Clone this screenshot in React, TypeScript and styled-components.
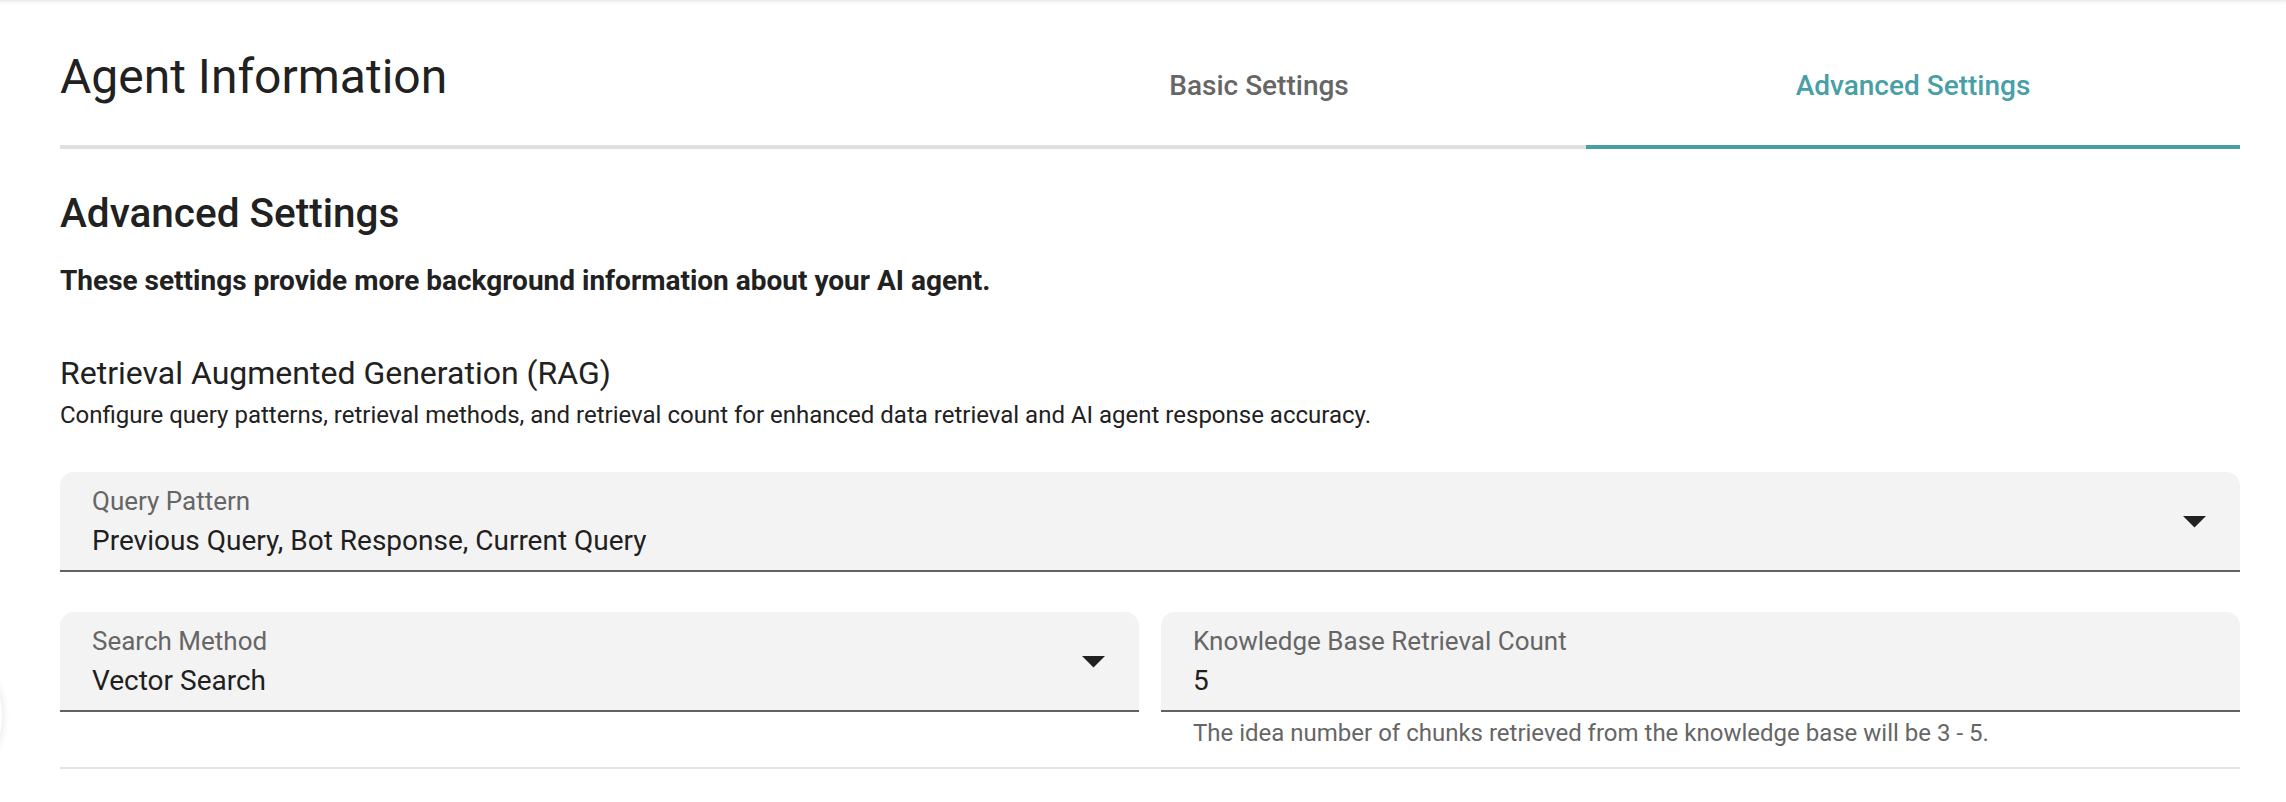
import React from "react";
import styled, { createGlobalStyle } from "styled-components";

const GlobalStyle = createGlobalStyle`
  html, body {
    margin: 0;
    padding: 0;
    background: #ffffff;
  }
  body {
    font-family: Roboto, "Noto Sans", "Liberation Sans", sans-serif;
    color: #212121;
  }
  * {
    box-sizing: border-box;
  }
`;

const Page = styled.div`
  position: relative;
  min-height: 802px;
  padding: 0 46px 0 60px;
  background: linear-gradient(to bottom, #e9e9e9 0, #f7f7f7 2px, #ffffff 5px);
  overflow: hidden;
`;

const EdgeShadow = styled.div`
  position: absolute;
  left: -44px;
  top: 668px;
  width: 46px;
  height: 96px;
  border-radius: 50%;
  background: #ffffff;
  box-shadow: 0 0 8px rgba(0, 0, 0, 0.12);
`;

const Header = styled.div`
  display: grid;
  grid-template-columns: 4fr 3fr 3fr;
  height: 149px;
`;

const Title = styled.h1`
  margin: 0;
  padding-top: 49px;
  font-size: 48px;
  line-height: 56px;
  font-weight: 400;
  color: #212121;
  border-bottom: 4px solid #e0e0e0;
`;

const Tab = styled.button<{ $active?: boolean }>`
  display: flex;
  align-items: center;
  justify-content: center;
  padding: 27px 0 0;
  margin: 0;
  border: none;
  border-bottom: 4px solid ${(p) => (p.$active ? "#489fa5" : "#e0e0e0")};
  background: transparent;
  font-family: Roboto, "Noto Sans", sans-serif;
  font-size: 28px;
  line-height: 32px;
  font-weight: 500;
  color: ${(p) => (p.$active ? "#489fa5" : "#666666")};
  cursor: pointer;
`;

const SectionTitle = styled.h2`
  margin: 40px 0 0;
  font-size: 40.5px;
  line-height: 48px;
  font-weight: 500;
  color: #212121;
`;

const Lead = styled.p`
  margin: 28px 0 0;
  font-size: 28px;
  line-height: 32px;
  font-weight: 700;
  color: #212121;
`;

const GroupTitle = styled.h3`
  margin: 57px 0 0;
  font-size: 32px;
  line-height: 38px;
  font-weight: 400;
  color: #212121;
`;

const GroupDesc = styled.p`
  margin: 10px 0 0;
  font-size: 24px;
  line-height: 26px;
  font-weight: 400;
  color: #212121;
`;

const FieldStack = styled.div`
  margin-top: 44px;
  display: flex;
  flex-direction: column;
  gap: 40px;
`;

const Row = styled.div`
  display: grid;
  grid-template-columns: 1fr 1fr;
  column-gap: 22px;
`;

const Column = styled.div`
  display: flex;
  flex-direction: column;
`;

const Field = styled.div<{ $select?: boolean }>`
  display: flex;
  align-items: center;
  height: 100px;
  padding: 15px ${(p) => (p.$select ? "34px" : "32px")} 13px 32px;
  background: #f3f3f3;
  border-radius: 14px 14px 0 0;
  border-bottom: 2px solid #616161;
`;

const FieldText = styled.div`
  flex: 1;
  display: flex;
  flex-direction: column;
  gap: 6px;
`;

const Label = styled.span`
  font-size: 26px;
  line-height: 30px;
  color: #666666;
`;

const Value = styled.span`
  font-size: 28px;
  line-height: 34px;
  color: #1f1f1f;
  padding-top: 2px;
`;

const Helper = styled.p`
  margin: 7px 0 0;
  padding-left: 32px;
  font-size: 24px;
  line-height: 28px;
  color: #666666;
`;

const Divider = styled.div`
  margin-top: 20px;
  height: 2px;
  background: #e3e3e3;
`;

const Arrow = () => (
  <svg width="23" height="12" viewBox="0 0 23 12" aria-hidden="true">
    <polygon points="0,0 23,0 11.5,11.5" fill="#212121" />
  </svg>
);

export default function App() {
  return (
    <>
      <GlobalStyle />
      <Page>
        <EdgeShadow />
        <Header>
          <Title>Agent Information</Title>
          <Tab>Basic Settings</Tab>
          <Tab $active>Advanced Settings</Tab>
        </Header>

        <SectionTitle>Advanced Settings</SectionTitle>
        <Lead>These settings provide more background information about your AI agent.</Lead>

        <GroupTitle>Retrieval Augmented Generation (RAG)</GroupTitle>
        <GroupDesc>
          Configure query patterns, retrieval methods, and retrieval count for enhanced data retrieval and AI agent response accuracy.
        </GroupDesc>

        <FieldStack>
          <Field $select>
            <FieldText>
              <Label>Query Pattern</Label>
              <Value>Previous Query, Bot Response, Current Query</Value>
            </FieldText>
            <Arrow />
          </Field>

          <Row>
            <Column>
              <Field $select>
                <FieldText>
                  <Label>Search Method</Label>
                  <Value>Vector Search</Value>
                </FieldText>
                <Arrow />
              </Field>
            </Column>
            <Column>
              <Field>
                <FieldText>
                  <Label>Knowledge Base Retrieval Count</Label>
                  <Value>5</Value>
                </FieldText>
              </Field>
              <Helper>The idea number of chunks retrieved from the knowledge base will be 3 - 5.</Helper>
            </Column>
          </Row>
        </FieldStack>

        <Divider />
      </Page>
    </>
  );
}
